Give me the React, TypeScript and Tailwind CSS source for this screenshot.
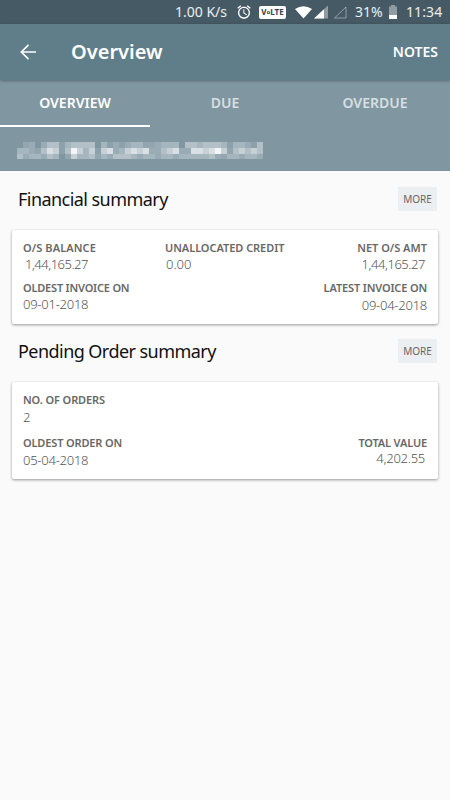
import React from "react";

const MOSAIC = [
  "02303551455550413134422344405545554144315",
  "44325761586461673467673356733776786256565",
  "53443540264452435554344344344444532443443",
];

const shades = [
  "bg-white/0",
  "bg-white/10",
  "bg-white/15",
  "bg-white/20",
  "bg-white/30",
  "bg-white/40",
  "bg-white/55",
  "bg-white/70",
  "bg-white/90",
];

const AlarmIcon = () => (
  <svg className="h-[16px] w-[16px]" viewBox="0 0 24 24" fill="white">
    <path d="M22 5.72l-4.6-3.86-1.29 1.53 4.6 3.86L22 5.72zM7.88 3.39L6.6 1.86 2 5.71l1.29 1.53 4.59-3.85zM12.5 8H11v6l4.75 2.85.75-1.23-4-2.37V8zM12 4c-4.97 0-9 4.03-9 9s4.02 9 9 9c4.97 0 9-4.03 9-9s-4.03-9-9-9zm0 16c-3.87 0-7-3.13-7-7s3.13-7 7-7 7 3.13 7 7-3.13 7-7 7z" />
  </svg>
);

const StatusBar = () => (
  <div className="flex h-6 items-center bg-[#465a65] pr-2 text-[14px] leading-6 text-white/90">
    <span className="ml-auto w-[61px] whitespace-nowrap">1.00 K/s</span>
    <AlarmIcon />
    <span className="ml-[7px] flex h-[13px] w-[27px] items-center justify-center rounded-[2px] bg-white text-[8px] font-bold text-[#33434d]">
      V<span className="text-[6px]">o</span>LTE
    </span>
    <svg className="ml-[9px] h-4 w-[52px]" viewBox="0 0 52 16">
      <path d="M0 5Q8.500 -0.500 17 5L8.500 14.500Z" fill="white" />
      <path d="M33 1.500V14.500H19Z" fill="white" fillOpacity="0.4" />
      <path d="M29 5.200V14.500H19Z" fill="white" />
      <path d="M51 3V14H39.500Z" fill="none" stroke="white" strokeOpacity="0.4" />
    </svg>
    <span className="ml-[8px] w-[29px]">31%</span>
    <svg className="ml-[5px] h-[14px] w-2" viewBox="0 0 8 14">
      <path d="M2 0H6V1.500H8V14H0V1.500H2Z" fill="white" fillOpacity="0.4" />
      <path d="M0 10H8V14H0Z" fill="white" />
    </svg>
    <span className="ml-[9px] w-9 tracking-[0.1px]">11:34</span>
  </div>
);

const Field = ({
  label,
  value,
  className = "",
  labelClass = "",
  valueClass = "",
}: {
  label: string;
  value: string;
  className?: string;
  labelClass?: string;
  valueClass?: string;
}) => (
  <div className={className}>
    <div className={`text-[11px] leading-4 font-semibold text-[#686868] ${labelClass}`}>{label}</div>
    <div className={`text-[13px] leading-4 font-light text-[#555] ${valueClass}`}>{value}</div>
  </div>
);

const SectionHeader = ({ title }: { title: string }) => (
  <div className="flex h-6 items-center justify-between pr-[13px] pl-[18px]">
    <h2 className="text-[18px] leading-6 tracking-[-0.55px] text-[#111]">{title}</h2>
    <button className="h-6 w-[39px] bg-[#eceff1] text-[10px] text-[#666]">MORE</button>
  </div>
);

const App = () => {
  return (
    <div className="h-[800px] w-[450px] overflow-hidden bg-[#fafafa] font-['Noto_Sans',sans-serif]">
      <StatusBar />
      <header className="relative flex h-14 items-center bg-[#607d8a] pr-3 pl-5 text-white shadow-[0_1px_3px_rgba(0,0,0,0.3)]">
        <svg className="h-4 w-4" viewBox="0 0 16 16" fill="none" stroke="white" strokeWidth="1.700">
          <path d="M16 8H1.500M8.500 0.800L1.300 8L8.500 15.200" />
        </svg>
        <h1 className="ml-[35px] text-[20px] font-semibold">Overview</h1>
        <button className="ml-auto pb-px text-[14px] font-semibold">NOTES</button>
      </header>
      <div className="h-[91px] bg-[#8097a2]">
        <nav className="flex h-[47px] text-[14px] font-semibold text-white/70">
          <button className="flex-1 border-b-2 border-white text-white">OVERVIEW</button>
          <button className="flex-1 border-b-2 border-transparent">DUE</button>
          <button className="flex-1 border-b-2 border-transparent">OVERDUE</button>
        </nav>
        <div className="mt-[15px] ml-[17px] w-[246px] blur-[0.6px]">
          {MOSAIC.map((row, i) => (
            <div key={i} className="flex h-[6px] last:h-[5px]">
              {row.split("").map((c, j) => (
                <span key={j} className={`flex-1 ${shades[Number(c)]}`} />
              ))}
            </div>
          ))}
        </div>
      </div>

      <div className="pt-4">
        <SectionHeader title="Financial summary" />
        <div className="mx-3 mt-[19px] h-[94px] rounded-[2px] bg-white px-[11px] pt-[10px] shadow-[0_1px_3px_rgba(0,0,0,0.4)]">
          <div className="flex">
            <Field
              className="w-[142px]"
              label="O/S BALANCE"
              value="1,44,165.27"
              labelClass="tracking-[0.1px]"
              valueClass="pl-0.5 tracking-[-0.5px]"
            />
            <Field label="UNALLOCATED CREDIT" value="0.00" labelClass="tracking-[-0.05px]" valueClass="pl-px" />
            <Field
              className="ml-auto text-right"
              label="NET O/S AMT"
              value="1,44,165.27"
              valueClass="pr-0.5 tracking-[-0.45px]"
            />
          </div>
          <div className="mt-2 flex justify-between">
            <Field
              label="OLDEST INVOICE ON"
              value="09-01-2018"
              labelClass="tracking-[-0.2px]"
              valueClass="tracking-[-0.25px]"
            />
            <Field
              className="text-right"
              label="LATEST INVOICE ON"
              value="09-04-2018"
              labelClass="tracking-[-0.15px]"
              valueClass="pt-px tracking-[-0.25px]"
            />
          </div>
        </div>
      </div>

      <div className="pt-[15px]">
        <SectionHeader title="Pending Order summary" />
        <div className="mx-3 mt-[19px] h-[97px] rounded-[2px] bg-white px-[11px] pt-[10px] shadow-[0_1px_3px_rgba(0,0,0,0.4)]">
          <Field label="NO. OF ORDERS" value="2" labelClass="tracking-[-0.1px]" valueClass="pt-px" />
          <div className="mt-[10px] flex justify-between">
            <Field
              label="OLDEST ORDER ON"
              value="05-04-2018"
              labelClass="tracking-[-0.15px]"
              valueClass="pt-px tracking-[-0.25px]"
            />
            <Field
              className="text-right"
              label="TOTAL VALUE"
              value="4,202.55"
              labelClass="tracking-[-0.15px]"
              valueClass="-mt-px pr-0.5 tracking-[-0.25px]"
            />
          </div>
        </div>
      </div>
    </div>
  );
};

export default App;
